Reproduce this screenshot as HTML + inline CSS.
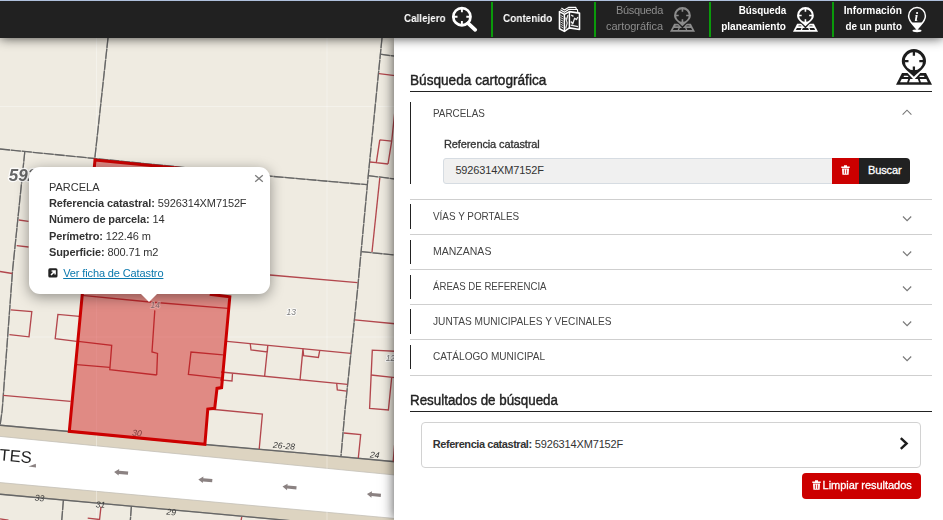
<!DOCTYPE html>
<html lang="es">
<head>
<meta charset="utf-8">
<title>Búsqueda cartográfica</title>
<style>
html,body{margin:0;padding:0;}
body{width:943px;height:520px;overflow:hidden;position:relative;background:#fff;font-family:"Liberation Sans",sans-serif;color:#222;}
.abs{position:absolute;}
.t{position:absolute;white-space:nowrap;line-height:1;}
/* top bar */
#bar{left:0;top:0;width:943px;height:38px;background:#212121;z-index:30;box-shadow:0 0 12px rgba(0,0,0,.75);}
#bar .topline{left:0;top:0;width:943px;height:1px;background:#afc0dc;}
#bar .sep{top:2px;width:2px;height:35px;background:#0a9a0a;}
#bar .lbl{will-change:transform;color:#fff;font-weight:bold;font-size:11px;text-align:right;line-height:16px;}
#bar .lbl.off{color:#8c8c8c;font-weight:normal;}
/* map */
#map{left:0;top:38px;width:395px;height:482px;background:#efebe1;overflow:hidden;z-index:1;}
/* panel */
#panel{left:394px;top:38px;width:549px;height:482px;background:#fff;z-index:10;box-shadow:0 0 12px rgba(0,0,0,.7);}
.h{font-size:14px;font-weight:normal;color:#222;-webkit-text-stroke:0.4px #222;}
.hr{height:1px;background:#222;}
.sepl{height:1px;background:#cfcfcf;left:410px;width:522px;}
.lb{width:1px;background:#222;left:410px;}
.acc{font-size:11px;color:#444;}
/* popup */
#popup{left:29px;top:167px;width:241px;height:127px;background:#fff;border-radius:11px;z-index:5;box-shadow:0 3px 14px rgba(0,0,0,.4);}
#popup .t{font-size:11px;color:#333;left:20px;}
#popup b{font-weight:bold;}
#popup .ls{letter-spacing:-0.12px;}
.med{-webkit-text-stroke:0.3px currentColor;}
/*fit*/
#t1{display:inline-block;transform:scaleX(0.8952);transform-origin:left center}
#t2{display:inline-block;transform:scaleX(0.9046);transform-origin:left center}
#t3a{letter-spacing:-0.306px}
#t3b{letter-spacing:-0.040px}
#t4a{display:inline-block;transform:scaleX(0.8931);transform-origin:right center}
#t4b{display:inline-block;transform:scaleX(0.9125);transform-origin:right center}
#t5a{display:inline-block;transform:scaleX(0.9245);transform-origin:right center}
#t5b{display:inline-block;transform:scaleX(0.8977);transform-origin:right center}
#h1{display:inline-block;transform:scaleX(0.9729);transform-origin:left center}
#h2{display:inline-block;transform:scaleX(0.9554);transform-origin:left center}
#a0{display:inline-block;transform:scaleX(0.8968);transform-origin:left center}
#a1{display:inline-block;transform:scaleX(0.8998);transform-origin:left center}
#a2{display:inline-block;transform:scaleX(0.9554);transform-origin:left center}
#a3{display:inline-block;transform:scaleX(0.8758);transform-origin:left center}
#a4{display:inline-block;transform:scaleX(0.9221);transform-origin:left center}
#a5{display:inline-block;transform:scaleX(0.9146);transform-origin:left center}
#l1{letter-spacing:-0.106px}
#i1{letter-spacing:-0.158px}
#b1{letter-spacing:-0.125px}
#r1b{letter-spacing:-0.444px}
#r1n{letter-spacing:-0.158px}
#c1{letter-spacing:-0.043px}
/*endfit*/</style>
</head>
<body>

<!-- MAP -->
<div id="map" class="abs">
<svg id="mapsvg" width="395" height="482" viewBox="0 38 395 482" style="position:absolute;left:0;top:0;will-change:transform">
<rect x="0" y="38" width="395" height="482" fill="#efebe1"/>
<!-- road -->
<polygon points="0,425.2 395,461.7 395,530 0,494.2" fill="#ddd4c1"/>
<polygon points="-2,436.2 397,475.2 397,518.7 -2,482.4" fill="#ffffff" stroke="#c4c0b8" stroke-width=".8"/>
<!-- tile seams -->
<g stroke="#ffffff" stroke-opacity=".35" stroke-width="1">
<line x1="96.5" y1="38" x2="96.5" y2="520"/><line x1="327" y1="38" x2="327" y2="520"/>
<line x1="0" y1="106.5" x2="395" y2="106.5"/><line x1="0" y1="337" x2="395" y2="337"/>
</g>
<!-- gray parcel lines -->
<g fill="none" stroke="#a3a19b" stroke-width="1.2">
<path d="M108,38 L94.8,158.5"/>
<path d="M0,149 L94.8,158.5 L270,176.2 L367,184.7"/>
<path d="M24.8,151.5 L12.6,270 L2.2,410 L0,426"/>
<path d="M382,38 L368.2,176 L357.5,290 L345,410 L341,456"/>
<path d="M380,54.2 L395,56.2"/>
<path d="M368,175.6 L395,179"/>
<path d="M361.5,251.7 L395,255"/>
<path d="M0,425.2 L69,431.5 L205,444.5 L300,452.9 L395,461.7"/>
<path d="M0,494.2 L100,503.4 L200,512.4 L290,520.6"/>
<path d="M63.4,500 L61.7,521"/>
<path d="M131.4,506 L130.3,521"/>
</g>
<g fill="none" stroke="#666666" stroke-width="1.3" stroke-dasharray="10 1">
<path d="M108,38 L94.8,158.5"/>
<path d="M0,149 L94.8,158.5 L270,176.2 L367,184.7"/>
<path d="M24.8,151.5 L12.6,270 L2.2,410 L0,426"/>
<path d="M382,38 L368.2,176 L357.5,290 L345,410 L341,456"/>
<path d="M380,54.2 L395,56.2"/>
<path d="M368,175.6 L395,179"/>
<path d="M361.5,251.7 L395,255"/>
<path d="M0,425.2 L69,431.5 L205,444.5 L300,452.9 L395,461.7" stroke-dasharray="none" stroke-width="1.4"/>
<path d="M0,494.2 L100,503.4 L200,512.4 L290,520.6" stroke-dasharray="none" stroke-width="1.4"/>
<path d="M63.4,500 L61.7,521"/>
<path d="M131.4,506 L130.3,521"/>
</g>
<!-- red building lines -->
<g fill="none" stroke="#b3474d" stroke-width="1.35">
<path d="M379,73.7 L395,75.6"/>
<path d="M395,110 L391.7,141.2 L388,164"/>
<path d="M379.8,139.8 L391.7,141.2 M388,164 L376.3,162.7 L379.8,139.8 M370,162 L376.3,162.7"/>
<path d="M379.8,178 L372,252"/>
<path d="M270,275 L357.5,282.7"/>
<path d="M18.8,220 L28.5,221.3"/>
<path d="M16.7,245.6 L28.5,247"/>
<path d="M0,271.5 L12.3,273.5"/>
<path d="M10.8,309.8 L31.8,311.7 L29,336.8 L9.4,334.6"/>
<path d="M79.4,316.3 L57.9,314.4 L55.2,338.6 L76.7,341.3"/>
<path d="M3.2,395.3 L70.5,401.3"/>
<!-- inside polygon -->
<path d="M82,295.3 L150,302 L227.8,308.3"/>
<path d="M154.8,310.4 L152,352 L157.5,353.4 L156.7,375"/>
<path d="M78,341.3 L111.7,345.4 L109.8,369.6 L156.7,375"/>
<path d="M76.7,364.7 L109.8,367.4"/>
<path d="M223,354.8 L191,352 L188.4,374.4 L221.5,378.2"/>
<!-- right of polygon -->
<path d="M227,341.3 L350.7,353.4"/>
<path d="M250.3,344 L251,350 L267.3,352 L267.8,345.4 L264.6,376.3"/>
<path d="M303,348.6 L300,380.4 M303,348.6 L303.6,355.6 L318.4,357.5 L319.8,350.2"/>
<path d="M221,372 L347.5,384.4"/>
<path d="M232.5,373.5 L232,381 L220,379.8"/>
<path d="M336.7,383.3 L337.3,389.8 L346.7,391.2"/>
<path d="M354.8,319.8 L395,323.8"/>
<path d="M395,351.3 L372.3,350.2 L369.6,408.3 L388.4,410 L391.7,377.5"/>
<path d="M371,375 L395,377.7"/>
<path d="M344,433 L360.7,434.6 L358.3,458"/>
<path d="M209.4,409 L262.4,414.2 L259.2,449"/>
<path d="M101,506.5 L99.4,521 M87.7,518.2 L99.4,519.5"/>
<path d="M0,518.9 L8.5,520.2"/>
<path d="M241.7,517 L241,521"/>
<path d="M394.6,445 L393.2,461.5"/>
</g>
<!-- selected parcel -->
<polygon points="95,160 243,174.5 215,280 211.3,294.4 229.8,296.8 221.6,387.6 217,388.4 214.7,408.3 207.8,409 204.9,444.3 69.3,431.3" fill="#cc0000" fill-opacity=".41" stroke="#cc0000" stroke-width="3" stroke-linejoin="miter"/>
<!-- arrows -->
<g fill="#8b8282">
<path d="M28.5,466.6 L35.8,463.7 L36,467.5 Z"/>
<path d="M-7,0 L-2.2,-3.3 L-2.2,-1.6 L7,-1.6 L7,1.6 L-2.2,1.6 L-2.2,3.3 Z" transform="translate(121.1,472.5) rotate(5)"/>
<path d="M-7,0 L-2.2,-3.3 L-2.2,-1.6 L7,-1.6 L7,1.6 L-2.2,1.6 L-2.2,3.3 Z" transform="translate(205.3,480) rotate(5)"/>
<path d="M-7,0 L-2.2,-3.3 L-2.2,-1.6 L7,-1.6 L7,1.6 L-2.2,1.6 L-2.2,3.3 Z" transform="translate(289.5,487.2) rotate(5)"/>
<path d="M-7,0 L-2.2,-3.3 L-2.2,-1.6 L7,-1.6 L7,1.6 L-2.2,1.6 L-2.2,3.3 Z" transform="translate(373.9,494.7) rotate(5)"/>
</g>
<!-- labels -->
<g font-family="Liberation Sans, sans-serif">
<text x="31.2" y="463.2" text-anchor="end" font-size="16.6" fill="#222" transform="rotate(5 31.2 463.2)">TES</text>
<text x="8.8" y="180.8" font-size="17" font-weight="bold" font-style="italic" fill="#666" stroke="#fff" stroke-opacity=".85" stroke-width="2.6" stroke-linejoin="round" paint-order="stroke">59263</text>
<g font-size="8.5" font-style="italic" fill="#7d7d7d" stroke="#fff" stroke-opacity=".8" stroke-width="2" stroke-linejoin="round" paint-order="stroke" text-anchor="middle">
<text x="291.3" y="315.4">13</text>
<text x="390.5" y="361.3">12</text>
</g>
<g font-size="8.5" font-style="italic" fill="#8a6a6c" stroke="#eaa9a6" stroke-opacity=".8" stroke-width="2" stroke-linejoin="round" paint-order="stroke" text-anchor="middle">
<text x="155.2" y="308.4">14</text>
</g>
<g font-size="8.6" font-style="italic" fill="#3a3a3a" text-anchor="middle">
<text x="136.8" y="436" fill="#7a3a3c" transform="rotate(5 136.8 436)">30</text>
<text x="283.8" y="448.8" transform="rotate(5 283.8 448.8)">26-28</text>
<text x="374.6" y="457.8" transform="rotate(5 374.6 457.8)">24</text>
<text x="39.2" y="501" transform="rotate(5 39.2 501)">33</text>
<text x="100.2" y="507.6" transform="rotate(5 100.2 507.6)">31</text>
<text x="171" y="515" transform="rotate(5 171 515)">29</text>
</g>
</g>
</svg>
</div>

<!-- POPUP -->
<div id="popup" class="abs">
  <div class="abs" style="left:111px;top:126px;width:0;height:0;border-left:9px solid transparent;border-right:9px solid transparent;border-top:9px solid #fff"></div>
  <div class="t" style="top:14.8px">PARCELA</div>
  <div class="t ls" style="top:31.3px"><b>Referencia catastral:</b> 5926314XM7152F</div>
  <div class="t ls" style="top:46.6px"><b>Número de parcela:</b> 14</div>
  <div class="t ls" style="top:63.5px"><b>Perímetro:</b> 122.46 m</div>
  <div class="t ls" style="top:79.7px"><b>Superficie:</b> 800.71 m2</div>
  <svg class="abs" style="left:18.9px;top:100.7px" width="10" height="10" viewBox="0 0 10 10"><rect x="0.3" y="0.3" width="9.2" height="9.2" rx="1.6" fill="#222"/><path d="M3,7 L6.6,3.4 M3.6,2.9 H7.1 V6.4" stroke="#fff" stroke-width="1.5" fill="none"/></svg>
  <div class="t ls" style="top:101.3px;left:34.2px;color:#0a78ad;text-decoration:underline">Ver ficha de Catastro</div>
  <svg class="abs" style="left:224.5px;top:6.5px" width="10" height="10" viewBox="0 0 10 10"><path d="M1.2,1.2 L8.8,7.8 M8.8,1.2 L1.2,7.8" stroke="#7c7c7c" stroke-width="1.3" fill="none"/></svg>
</div>

<!-- PANEL -->
<div id="panel" class="abs"></div>
<div id="pc" class="abs" style="left:0;top:0;z-index:12;width:943px;height:520px">
  <div class="t h" id="h1" style="left:410.3px;top:73.3px">Búsqueda cartográfica</div>
  <svg class="abs" style="left:896px;top:49px;color:#1d1d1d;--bg:#fff" width="36" height="36"><use href="#pinmap"/></svg>
  <div class="abs hr" style="left:410px;top:91px;width:522px"></div>

  <div class="abs lb" style="top:102px;height:82px"></div>
  <div class="t acc" id="a0" style="left:432.8px;top:107.7px">PARCELAS</div>
  <svg class="abs" style="left:901px;top:108px" width="12" height="8" viewBox="0 0 12 8"><path d="M1.6,6.6 L6,2.2 L10.4,6.6" stroke="#777" stroke-width="1.1" fill="none"/></svg>
  <div class="t med" id="l1" style="left:444px;top:138.7px;font-size:11px;color:#333">Referencia catastral</div>
  <div class="abs" style="left:443px;top:158px;width:390px;height:26px;background:#f0f0f0;border:1px solid #d6dce2;border-radius:3px 0 0 3px;box-sizing:border-box"></div>
  <div class="t" id="i1" style="left:455.4px;top:165.3px;font-size:11px;color:#333">5926314XM7152F</div>
  <div class="abs" style="left:832px;top:158px;width:27px;height:26px;background:#cc0000"></div>
  <svg class="abs" style="left:841px;top:165px" width="9" height="10" viewBox="0 0 9 10"><use href="#trash"/></svg>
  <div class="abs" style="left:859px;top:158px;width:51px;height:26px;background:#212121;border-radius:0 4px 4px 0"></div>
  <div class="t med" id="b1" style="left:868px;top:165.3px;font-size:11px;color:#fff">Buscar</div>

  <div class="abs sepl" style="top:199px"></div>
  <div class="abs lb" style="top:204px;height:25px"></div>
  <div class="t acc" id="a1" style="left:432.8px;top:210.9px">VÍAS Y PORTALES</div>
  <svg class="abs chev" style="left:901px;top:214px" width="12" height="8" viewBox="0 0 12 8"><path d="M2,2.5 L6.1,6.6 L10.2,2.5" stroke="#7a7a7a" stroke-width="1.2" fill="none"/></svg>
  <div class="abs sepl" style="top:234px"></div>
  <div class="abs lb" style="top:239.5px;height:24.5px"></div>
  <div class="t acc" id="a2" style="left:432.8px;top:246.1px">MANZANAS</div>
  <svg class="abs chev" style="left:901px;top:249px" width="12" height="8" viewBox="0 0 12 8"><path d="M2,2.5 L6.1,6.6 L10.2,2.5" stroke="#7a7a7a" stroke-width="1.2" fill="none"/></svg>
  <div class="abs sepl" style="top:269px"></div>
  <div class="abs lb" style="top:275.4px;height:23.6px"></div>
  <div class="t acc" id="a3" style="left:432.8px;top:280.6px">ÁREAS DE REFERENCIA</div>
  <svg class="abs chev" style="left:901px;top:284px" width="12" height="8" viewBox="0 0 12 8"><path d="M2,2.5 L6.1,6.6 L10.2,2.5" stroke="#7a7a7a" stroke-width="1.2" fill="none"/></svg>
  <div class="abs sepl" style="top:304px"></div>
  <div class="abs lb" style="top:309px;height:25px"></div>
  <div class="t acc" id="a4" style="left:432.8px;top:315.9px">JUNTAS MUNICIPALES Y VECINALES</div>
  <svg class="abs chev" style="left:901px;top:319px" width="12" height="8" viewBox="0 0 12 8"><path d="M2,2.5 L6.1,6.6 L10.2,2.5" stroke="#7a7a7a" stroke-width="1.2" fill="none"/></svg>
  <div class="abs sepl" style="top:339px"></div>
  <div class="abs lb" style="top:345px;height:24px"></div>
  <div class="t acc" id="a5" style="left:432.8px;top:351.3px">CATÁLOGO MUNICIPAL</div>
  <svg class="abs chev" style="left:901px;top:354px" width="12" height="8" viewBox="0 0 12 8"><path d="M2,2.5 L6.1,6.6 L10.2,2.5" stroke="#7a7a7a" stroke-width="1.2" fill="none"/></svg>
  <div class="abs sepl" style="top:375px"></div>

  <div class="t h" id="h2" style="left:410.3px;top:393.3px">Resultados de búsqueda</div>
  <div class="abs hr" style="left:410px;top:410.5px;width:522px"></div>
  <div class="abs" style="left:421px;top:422px;width:500px;height:46px;border:1px solid #d2d2d2;border-radius:4px;box-sizing:border-box;background:#fff"></div>
  <div class="t" id="r1" style="left:432.8px;top:439px;font-size:11px;color:#333"><b id="r1b">Referencia catastral:</b> <span id="r1n">5926314XM7152F</span></div>
  <svg class="abs" style="left:898px;top:436px" width="12" height="15" viewBox="0 0 12 15"><path d="M2.8,2.2 L8.6,7.5 L2.8,12.8" stroke="#1d1d1d" stroke-width="2.4" fill="none"/></svg>
  <div class="abs" style="left:802px;top:473px;width:119px;height:26px;background:#cc0000;border-radius:4px"></div>
  <svg class="abs" style="left:811.6px;top:479.9px" width="9" height="10" viewBox="0 0 9 10"><use href="#trash"/></svg>
  <div class="t med" id="c1" style="left:822.6px;top:480.1px;font-size:11px;color:#fff">Limpiar resultados</div>
</div>

<!-- TOP BAR -->
<div id="bar" class="abs">
  <div class="abs topline"></div>
  <div class="abs sep" style="left:491px"></div>
  <div class="abs sep" style="left:594px"></div>
  <div class="abs sep" style="left:709px"></div>
  <div class="abs sep" style="left:832px"></div>
  <div class="t lbl" id="t1" style="left:404.2px;top:10.1px">Callejero</div>
  <svg class="abs" style="left:448px;top:3px" width="32" height="32" viewBox="448 3 32 32"><circle cx="461.9" cy="16.7" r="8.6" stroke="#fff" stroke-width="2.7" fill="none"/><path d="M461.9,8 V12.3 M461.9,21.1 V25.4 M453.2,16.7 H457.5 M466.3,16.7 H470.6" stroke="#fff" stroke-width="1.9" fill="none"/><path d="M468.2,23.3 L475.2,29.8" stroke="#fff" stroke-width="3.8" stroke-linecap="round"/></svg>
  <div class="t lbl" id="t2" style="left:503.4px;top:10.1px">Contenido</div>
  <svg class="abs" style="left:556px;top:4px" width="28" height="30" viewBox="556 4 28 30" fill="none" stroke="#fff" stroke-width="1.6" stroke-linejoin="round"><path d="M559.5,11.6 L564.4,14.4 L569.4,11.6 L579.5,13.1 L579.5,29.5 L569.4,27.9 L564.4,31.4 L559.5,28.7 Z"/><path d="M564.4,14.4 V31.4 M569.4,11.6 V27.9" stroke-width="1.5"/><path d="M560.4,9.7 L564.4,12.2 L568.9,9.3 L577.4,9.5 L577.8,12.4 M561.4,7.9 L564.4,9.9 L568.5,7.4 L575.8,7.4 L576.3,9.2" stroke-width="1.2"/><path d="M560.6,15.4 L563.3,16.9 M560.6,17.6 L563.3,19.1 M560.6,19.8 L563.3,21.3 M560.6,22 L563.3,23.5 M560.6,24.2 L563.3,25.7 M560.6,26.4 L563.3,27.9" stroke-width="1" stroke-opacity=".8"/><path d="M567.9,15 L566.4,20.5 L567.2,23 L565.7,28.5 M565.6,17.5 L566.4,20.5" stroke-width="1.2" stroke-opacity=".85"/><path d="M570.8,21.5 L572.8,23.8 L574.6,18.2 L576.4,19.6 L577.9,17 M570.8,25.2 L578,26.6 M571.2,15.2 L573.5,16.4" stroke-width="1.3" stroke-opacity=".9"/></svg>
  <div class="t lbl off" id="t3" style="right:280px;top:1.6px"><span id="t3a">Búsqueda</span><br><span id="t3b">cartográfica</span></div>
  <svg class="abs" style="left:670px;top:7px;color:#8c8c8c;--bg:#212121" width="25" height="25"><use href="#pinmap"/></svg>
  <div class="t lbl" id="t4" style="right:156.8px;top:1.6px"><span id="t4a">Búsqueda</span><br><span id="t4b">planeamiento</span></div>
  <svg class="abs" style="left:793px;top:7px;color:#fff;--bg:#212121" width="25" height="25"><use href="#pinmap"/></svg>
  <div class="t lbl" id="t5" style="right:40.8px;top:1.6px"><span id="t5a">Información</span><br><span id="t5b">de un punto</span></div>
  <svg class="abs" style="left:905px;top:5px;will-change:transform" width="24" height="28" viewBox="905 5 24 28"><path d="M917,29.4 C913.5,24.6 908.6,21.5 908.6,16 A8.4,8.4 0 0 1 925.4,16 C925.4,21.5 920.5,24.6 917,29.4 Z" fill="none" stroke="#fff" stroke-width="1.5"/><path d="M911.3,22.6 L922.7,22.6 L917,29.4 Z" fill="#fff"/><ellipse cx="917" cy="30.8" rx="4.6" ry="1.4" fill="#fff"/><text x="914.6" y="20.8" font-family="Liberation Serif,serif" font-style="italic" font-weight="bold" font-size="13" fill="#fff">i</text></svg>
</div>

<svg width="0" height="0" style="position:absolute">
 <defs>
  <symbol id="pinmap" viewBox="0 0 36 36">
   <polygon points="6,24.1 30,24.1 36,35.7 0,35.7" fill="currentColor"/>
   <g fill="var(--bg)">
    <polygon points="8.1,26.7 11.6,26.7 12.6,27.9 7.5,27.9"/>
    <polygon points="24.2,26.7 27.9,26.7 28.5,27.9 23.2,27.9"/>
    <polygon points="5.7,30.1 12.2,30.1 11.1,33.2 4.1,33.2"/>
    <polygon points="14.2,30.1 21.8,30.1 23,33.2 13,33.2"/>
    <polygon points="23.8,30.1 30.3,30.1 31.9,33.2 24.9,33.2"/>
    <path d="M17.9,31 L8.8,21 H27 Z"/>
   </g>
   <path d="M17.9,27.8 C13.4,22.6 5.8,19 5.8,12.2 A12.1,12.1 0 0 1 30,12.2 C30,19 22.4,22.6 17.9,27.8 Z M17.9,3.1 A9.1,9.1 0 0 0 17.9,21.3 A9.1,9.1 0 0 0 17.9,3.1 Z" fill="currentColor" fill-rule="evenodd"/>
   <path d="M17.9,2.5 V6.8 M17.9,17.6 V21.9 M8.2,12.2 H12.5 M23.3,12.2 H27.6" stroke="currentColor" stroke-width="2.3"/>
  </symbol>
  <symbol id="trash" viewBox="0 0 9 10">
   <path d="M0.3,1.6 H8.7 V2.9 H0.3 Z M3,0.3 H6 V1.6 H3 Z" fill="#fff"/>
   <path d="M1,3.4 H8 L7.6,9.8 H1.4 Z M2.9,4.4 V8.8 H3.7 V4.4 Z M5.3,4.4 V8.8 H6.1 V4.4 Z" fill="#fff" fill-rule="evenodd"/>
  </symbol>
 </defs>
</svg>

</body>
</html>
